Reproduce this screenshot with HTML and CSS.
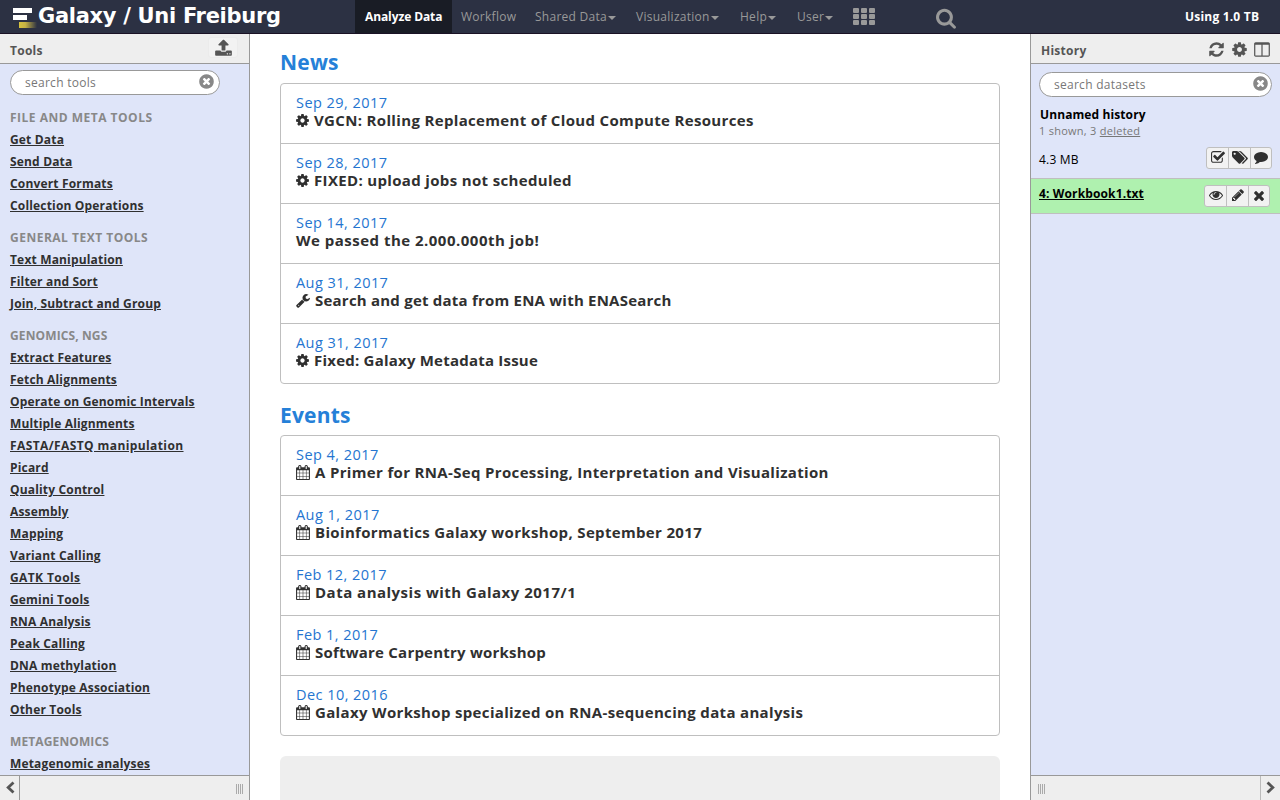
FILE: index.html
```html
<!DOCTYPE html>
<html lang="en">
<head>
<meta charset="utf-8">
<title>Galaxy / Uni Freiburg</title>
<link rel="stylesheet" href="styles.css">
</head>
<body>
<svg class="sprite" aria-hidden="true">
<symbol id="cog" viewBox="0 0 1536 1792"><path transform="translate(0 1536) scale(1 -1)" d="M1024 640q0 106 -75 181t-181 75t-181 -75t-75 -181t75 -181t181 -75t181 75t75 181zM1536 749v-222q0 -12 -8 -23t-20 -13l-185 -28q-19 -54 -39 -91q35 -50 107 -138q10 -12 10 -25t-9 -23q-27 -37 -99 -108t-94 -71q-12 0 -26 9l-138 108q-44 -23 -91 -38q-16 -136 -29 -186q-7 -28 -36 -28h-222q-14 0 -24.5 8.5t-11.5 21.5l-28 184q-49 16 -90 37l-141 -107q-10 -9 -25 -9q-14 0 -25 11q-126 114 -165 168q-7 10 -7 23q0 12 8 23q15 21 51 66.5t54 70.5q-27 50 -41 99l-183 27q-13 2 -21 12.5t-8 23.5v222q0 12 8 23t19 13l186 28q14 46 39 92q-40 57 -107 138q-10 12 -10 24q0 10 9 23q26 36 98.5 107.5t94.5 71.5q13 0 26 -10l138 -107q44 23 91 38q16 136 29 186q7 28 36 28h222q14 0 24.5 -8.5t11.5 -21.5l28 -184q49 -16 90 -37l142 107q9 9 24 9q13 0 25 -10q129 -119 165 -170q7 -8 7 -22q0 -12 -8 -23q-15 -21 -51 -66.5t-54 -70.5q26 -50 41 -98l183 -28q13 -2 21 -12.5t8 -23.5z"/></symbol>
<symbol id="calendar" viewBox="0 0 1664 1792"><path transform="translate(0 1536) scale(1 -1)" d="M128 -128h288v288h-288v-288zM480 -128h320v288h-320v-288zM128 224h288v320h-288v-320zM480 224h320v320h-320v-320zM128 608h288v288h-288v-288zM864 -128h320v288h-320v-288zM480 608h320v288h-320v-288zM1248 -128h288v288h-288v-288zM864 224h320v320h-320v-320zM512 1088v288q0 13 -9.5 22.5t-22.5 9.5h-64q-13 0 -22.5 -9.5t-9.5 -22.5v-288q0 -13 9.5 -22.5t22.5 -9.5h64q13 0 22.5 9.5t9.5 22.5zM1248 224h288v320h-288v-320zM864 608h320v288h-320v-288zM1248 608h288v288h-288v-288zM1280 1088v288q0 13 -9.5 22.5t-22.5 9.5h-64q-13 0 -22.5 -9.5t-9.5 -22.5v-288q0 -13 9.5 -22.5t22.5 -9.5h64q13 0 22.5 9.5t9.5 22.5zM1664 1152v-1280q0 -52 -38 -90t-90 -38h-1408q-52 0 -90 38t-38 90v1280q0 52 38 90t90 38h128v96q0 66 47 113t113 47h64q66 0 113 -47t47 -113v-96h384v96q0 66 47 113t113 47h64q66 0 113 -47t47 -113v-96h128q52 0 90 -38t38 -90z"/></symbol>
<symbol id="wrench" viewBox="0 0 1664 1792"><path transform="translate(0 1536) scale(1 -1)" d="M384 64q0 26 -19 45t-45 19t-45 -19t-19 -45t19 -45t45 -19t45 19t19 45zM1028 484l-682 -682q-37 -37 -90 -37q-52 0 -91 37l-106 108q-38 36 -38 90q0 53 38 91l681 681q39 -98 114.5 -173.5t173.5 -114.5zM1662 919q0 -39 -23 -106q-47 -134 -164.5 -217.5t-258.5 -83.5q-185 0 -316.5 131.5t-131.5 316.5t131.5 316.5t316.5 131.5q58 0 121.5 -16.5t107.5 -46.5q16 -11 16 -28t-16 -28l-293 -169v-224l193 -107q5 3 79 48.5t135.5 81t70.5 35.5q15 0 23.5 -10t8.5 -25z"/></symbol>
<symbol id="refresh" viewBox="0 0 1536 1792"><path transform="translate(0 1536) scale(1 -1)" d="M1511 480q0 -5 -1 -7q-64 -268 -268 -434.5t-478 -166.5q-146 0 -282.5 55t-243.5 157l-129 -129q-19 -19 -45 -19t-45 19t-19 45v448q0 26 19 45t45 19h448q26 0 45 -19t19 -45t-19 -45l-137 -137q71 -66 161 -102t187 -36q134 0 250 65t186 179q11 17 53 117q8 23 30 23h192q13 0 22.5 -9.5t9.5 -22.5zM1536 1280v-448q0 -26 -19 -45t-45 -19h-448q-26 0 -45 19t-19 45t19 45l138 138q-148 137 -349 137q-134 0 -250 -65t-186 -179q-11 -17 -53 -117q-8 -23 -30 -23h-199q-13 0 -22.5 9.5t-9.5 22.5v7q65 268 270 434.5t480 166.5q146 0 284 -55.5t245 -156.5l130 129q19 19 45 19t45 -19t19 -45z"/></symbol>
<symbol id="clear" viewBox="0 0 1536 1792"><path transform="translate(0 1536) scale(1 -1)" d="M1149 414q0 26 -19 45l-181 181l181 181q19 19 19 45q0 27 -19 46l-90 90q-19 19 -46 19q-26 0 -45 -19l-181 -181l-181 181q-19 19 -45 19q-27 0 -46 -19l-90 -90q-19 -19 -19 -46q0 -26 19 -45l181 -181l-181 -181q-19 -19 -19 -45q0 -27 19 -46l90 -90q19 -19 46 -19q26 0 45 19l181 181l181 -181q19 -19 45 -19q27 0 46 19l90 90q19 19 19 46zM1536 640q0 -209 -103 -385.5t-279.5 -279.5t-385.5 -103t-385.5 103t-279.5 279.5t-103 385.5t103 385.5t279.5 279.5t385.5 103t385.5 -103t279.5 -279.5t103 -385.5z"/></symbol>
<symbol id="times" viewBox="0 0 1408 1792"><path transform="translate(0 1536) scale(1 -1)" d="M1298 214q0 -40 -28 -68l-136 -136q-28 -28 -68 -28t-68 28l-294 294l-294 -294q-28 -28 -68 -28t-68 28l-136 136q-28 28 -28 68t28 68l294 294l-294 294q-28 28 -28 68t28 68l136 136q28 28 68 28t68 -28l294 -294l294 294q28 28 68 28t68 -28l136 -136q28 -28 28 -68t-28 -68l-294 -294l294 -294q28 -28 28 -68z"/></symbol>
<symbol id="eye" viewBox="0 0 1792 1792"><path transform="translate(0 1536) scale(1 -1)" d="M1664 576q-152 236 -381 353q61 -104 61 -225q0 -185 -131.5 -316.5t-316.5 -131.5t-316.5 131.5t-131.5 316.5q0 121 61 225q-229 -117 -381 -353q133 -205 333.5 -326.5t434.5 -121.5t434.5 121.5t333.5 326.5zM944 960q0 20 -14 34t-34 14q-125 0 -214.5 -89.5t-89.5 -214.5q0 -20 14 -34t34 -14t34 14t14 34q0 86 61 147t147 61q20 0 34 14t14 34zM1792 576q0 -34 -20 -69q-140 -230 -376.5 -368.5t-499.5 -138.5t-499.5 139t-376.5 368q-20 35 -20 69t20 69q140 229 376.5 368t499.5 139t499.5 -139t376.5 -368q20 -35 20 -69z"/></symbol>
<symbol id="pencil" viewBox="0 0 1536 1792"><path transform="translate(0 1536) scale(1 -1)" d="M363 0l91 91l-235 235l-91 -91v-107h128v-128h107zM886 928q0 22 -22 22q-10 0 -17 -7l-542 -542q-7 -7 -7 -17q0 -22 22 -22q10 0 17 7l542 542q7 7 7 17zM832 1120l416 -416l-832 -832h-416v416zM1515 1024q0 -53 -37 -90l-166 -166l-416 416l166 165q36 38 90 38q53 0 91 -38l235 -234q37 -39 37 -91z"/></symbol>
<symbol id="check" viewBox="0 0 1664 1792"><path transform="translate(0 1536) scale(1 -1)" d="M1408 606v-318q0 -119 -84.5 -203.5t-203.5 -84.5h-832q-119 0 -203.5 84.5t-84.5 203.5v832q0 119 84.5 203.5t203.5 84.5h832q63 0 117 -25q15 -7 18 -23q3 -17 -9 -29l-49 -49q-10 -10 -23 -10q-3 0 -9 2q-23 6 -45 6h-832q-66 0 -113 -47t-47 -113v-832q0 -66 47 -113t113 -47h832q66 0 113 47t47 113v254q0 13 9 22l64 64q10 10 23 10q6 0 12 -3q20 -8 20 -29zM1639 1095l-814 -814q-24 -24 -57 -24t-57 24l-430 430q-24 24 -24 57t24 57l110 110q24 24 57 24t57 -24l263 -263l647 647q24 24 57 24t57 -24l110 -110q24 -24 24 -57t-24 -57z"/></symbol>
<symbol id="tags" viewBox="0 0 1920 1792"><path transform="translate(0 1536) scale(1 -1)" d="M448 1088q0 53 -37.5 90.5t-90.5 37.5t-90.5 -37.5t-37.5 -90.5t37.5 -90.5t90.5 -37.5t90.5 37.5t37.5 90.5zM1515 512q0 -53 -37 -90l-491 -492q-39 -37 -91 -37q-53 0 -90 37l-715 716q-38 37 -64.5 101t-26.5 117v416q0 52 38 90t90 38h416q53 0 117 -26.5t102 -64.5l715 -714q37 -39 37 -91zM1899 512q0 -53 -37 -90l-491 -492q-39 -37 -91 -37q-36 0 -59 14t-53 45l470 470q37 37 37 90q0 52 -37 91l-715 714q-38 38 -102 64.5t-117 26.5h224q53 0 117 -26.5t102 -64.5l715 -714q37 -39 37 -91z"/></symbol>
<symbol id="comment" viewBox="0 0 1792 1792"><path transform="translate(0 1536) scale(1 -1)" d="M1792 640q0 -174 -120 -321.5t-326 -233t-450 -85.5q-70 0 -145 8q-198 -175 -460 -242q-49 -14 -114 -22q-17 -2 -30.5 9t-17.5 29v1q-3 4 -0.5 12t2 10t4.5 9.5l6 9t7 8.5t8 9q7 8 31 34.5t34.5 38t31 39.5t32.5 51t27 59t26 76q-157 89 -247.5 220t-90.5 281q0 130 71 248.5t191 204.5t286 136.5t348 50.5q244 0 450 -85.5t326 -233t120 -321.5z"/></symbol>
<symbol id="upload" viewBox="0 0 1664 1792"><path transform="translate(0 1536) scale(1 -1)" d="M1280 64q0 26 -19 45t-45 19t-45 -19t-19 -45t19 -45t45 -19t45 19t19 45zM1536 64q0 26 -19 45t-45 19t-45 -19t-19 -45t19 -45t45 -19t45 19t19 45zM1664 288v-320q0 -40 -28 -68t-68 -28h-1472q-40 0 -68 28t-28 68v320q0 40 28 68t68 28h427q21 -56 70.5 -92t110.5 -36h256q61 0 110.5 36t70.5 92h427q40 0 68 -28t28 -68zM1339 936q-17 -40 -59 -40h-256v-448q0 -26 -19 -45t-45 -19h-256q-26 0 -45 19t-19 45v448h-256q-42 0 -59 40q-17 39 14 69l448 448q18 19 45 19t45 -19l448 -448q31 -30 14 -69z"/></symbol>
<symbol id="search" viewBox="0 0 1664 1792"><path transform="translate(0 1536) scale(1 -1)" d="M1152 704q0 185 -131.5 316.5t-316.5 131.5t-316.5 -131.5t-131.5 -316.5t131.5 -316.5t316.5 -131.5t316.5 131.5t131.5 316.5zM1664 -128q0 -52 -38 -90t-90 -38q-54 0 -90 38l-343 342q-179 -124 -399 -124q-143 0 -273.5 55.5t-225 150t-150 225t-55.5 273.5t55.5 273.5t150 225t225 150t273.5 55.5t273.5 -55.5t225 -150t150 -225t55.5 -273.5q0 -220 -124 -399l343 -343q37 -37 37 -90z"/></symbol>
<symbol id="columns" viewBox="0 0 1664 1792"><path transform="translate(0 1536) scale(1 -1)" d="M160 0h608v1152h-640v-1120q0 -13 9.5 -22.5t22.5 -9.5zM1536 32v1120h-640v-1152h608q13 0 22.5 9.5t9.5 22.5zM1664 1248v-1216q0 -66 -47 -113t-113 -47h-1344q-66 0 -113 47t-47 113v1216q0 66 47 113t113 47h1344q66 0 113 -47t47 -113z"/></symbol>
</svg>

<header class="masthead">
  <a class="brand">
    <svg class="logo" width="26" height="22" viewBox="0 0 26 22"><defs><linearGradient id="gold"><stop offset="0" stop-color="#d6c23f"/><stop offset=".35" stop-color="#c6b244"/><stop offset="1" stop-color="#2c3143"/></linearGradient></defs><path fill="#fff" d="M1 1h19v5H1zM1 8h14v5H1z"/><path fill="url(#gold)" d="M7 15h18v6H7z"/></svg>
    <span class="brand-name">Galaxy / Uni Freiburg</span>
  </a>
  <nav class="menu">
    <a class="menu-item active">Analyze Data</a>
    <a class="menu-item workflow">Workflow</a>
    <a class="menu-item shared">Shared Data<i class="caret"></i></a>
    <a class="menu-item visual">Visualization<i class="caret"></i></a>
    <a class="menu-item help">Help<i class="caret"></i></a>
    <a class="menu-item user">User<i class="caret"></i></a>
    <svg class="apps" width="22" height="17" viewBox="0 0 22 17"><g fill="#999"><rect width="6" height="5" rx="1"/><rect x="8" width="6" height="5" rx="1"/><rect x="16" width="6" height="5" rx="1"/><rect y="6" width="6" height="5" rx="1"/><rect x="8" y="6" width="6" height="5" rx="1"/><rect x="16" y="6" width="6" height="5" rx="1"/><rect y="12" width="6" height="5" rx="1"/><rect x="8" y="12" width="6" height="5" rx="1"/><rect x="16" y="12" width="6" height="5" rx="1"/></g></svg>
    <svg class="find" width="20" height="22"><use href="#search"/></svg>
  </nav>
  <span class="quota">Using 1.0 TB</span>
</header>

<div class="workspace">
  <aside class="panel tools">
    <div class="panel-head"><span>Tools</span><button class="upload"><svg width="17" height="18"><use href="#upload"/></svg></button></div>
    <div class="panel-body">
      <div class="search-box"><span>search tools</span><svg width="15" height="17"><use href="#clear"/></svg></div>
      <h3>FILE AND META TOOLS</h3>
      <ul><li><a>Get Data</a></li><li><a>Send Data</a></li><li><a>Convert Formats</a></li><li><a>Collection Operations</a></li></ul>
      <h3>GENERAL TEXT TOOLS</h3>
      <ul><li><a>Text Manipulation</a></li><li><a>Filter and Sort</a></li><li><a>Join, Subtract and Group</a></li></ul>
      <h3 class="tight">GENOMICS, NGS</h3>
      <ul><li><a>Extract Features</a></li><li><a>Fetch Alignments</a></li><li><a>Operate on Genomic Intervals</a></li><li><a>Multiple Alignments</a></li><li><a class="wide">FASTA/FASTQ manipulation</a></li><li><a>Picard</a></li><li><a>Quality Control</a></li><li><a>Assembly</a></li><li><a>Mapping</a></li><li><a>Variant Calling</a></li><li><a class="wide">GATK Tools</a></li><li><a>Gemini Tools</a></li><li><a>RNA Analysis</a></li><li><a>Peak Calling</a></li><li><a>DNA methylation</a></li><li><a>Phenotype Association</a></li><li><a>Other Tools</a></li></ul>
      <h3 class="tight">METAGENOMICS</h3>
      <ul><li><a>Metagenomic analyses</a></li></ul>
    </div>
    <div class="panel-foot"><span class="collapse"><svg width="9" height="13" viewBox="0 0 9 13"><path d="M7.5 1.5L2.2 6.5L7.5 11.5"/></svg></span><span class="grip"></span></div>
  </aside>

  <main class="center">
    <h2>News</h2>
    <div class="list">
      <article><time>Sep 29, 2017</time><p><svg width="13" height="15"><use href="#cog"/></svg>VGCN: Rolling Replacement of Cloud Compute Resources</p></article>
      <article><time>Sep 28, 2017</time><p><svg width="13" height="15"><use href="#cog"/></svg>FIXED: upload jobs not scheduled</p></article>
      <article><time>Sep 14, 2017</time><p class="wide">We passed the 2.000.000th job!</p></article>
      <article><time>Aug 31, 2017</time><p class="tight"><svg width="14" height="15"><use href="#wrench"/></svg>Search and get data from ENA with ENASearch</p></article>
      <article><time>Aug 31, 2017</time><p class="tight"><svg width="13" height="15"><use href="#cog"/></svg>Fixed: Galaxy Metadata Issue</p></article>
    </div>
    <h2 class="events">Events</h2>
    <div class="list">
      <article><time>Sep 4, 2017</time><p><svg width="14" height="15"><use href="#calendar"/></svg>A Primer for RNA-Seq Processing, Interpretation and Visualization</p></article>
      <article><time>Aug 1, 2017</time><p><svg width="14" height="15"><use href="#calendar"/></svg>Bioinformatics Galaxy workshop, September 2017</p></article>
      <article><time>Feb 12, 2017</time><p class="wide"><svg width="14" height="15"><use href="#calendar"/></svg>Data analysis with Galaxy 2017/1</p></article>
      <article><time>Feb 1, 2017</time><p class="tight"><svg width="14" height="15"><use href="#calendar"/></svg>Software Carpentry workshop</p></article>
      <article><time>Dec 10, 2016</time><p><svg width="14" height="15"><use href="#calendar"/></svg>Galaxy Workshop specialized on RNA-sequencing data analysis</p></article>
    </div>
    <div class="jumbo"></div>
  </main>

  <aside class="panel history">
    <div class="panel-head"><span>History</span><span class="head-icons"><svg width="15" height="17"><use href="#refresh"/></svg><svg width="15" height="17"><use href="#cog"/></svg><svg width="16" height="17"><use href="#columns"/></svg></span></div>
    <div class="panel-body">
      <div class="search-box"><span>search datasets</span><svg width="15" height="17"><use href="#clear"/></svg></div>
      <div class="history-name">Unnamed history</div>
      <div class="counts">1 shown, 3 <u>deleted</u></div>
      <div class="size-row"><span>4.3 MB</span><span class="buttons"><b><svg width="14" height="15"><use href="#check"/></svg></b><b><svg width="16" height="15"><use href="#tags"/></svg></b><b><svg width="14" height="14"><use href="#comment"/></svg></b></span></div>
      <div class="dataset"><a>4: Workbook1.txt</a><span class="buttons"><b><svg width="14" height="14"><use href="#eye"/></svg></b><b><svg width="12" height="14"><use href="#pencil"/></svg></b><b><svg width="12" height="15"><use href="#times"/></svg></b></span></div>
    </div>
    <div class="panel-foot"><span class="grip"></span><span class="collapse"><svg width="9" height="13" viewBox="0 0 9 13"><path d="M1.5 1.5L6.8 6.5L1.5 11.5"/></svg></span></div>
  </aside>
</div>
</body>
</html>
```

FILE: styles.css
```css
* { box-sizing: border-box; }
body { margin: 0; width: 1280px; height: 800px; overflow: hidden; display: flex; flex-direction: column; font: 12px/18px "Lucida Grande", "Open Sans", sans-serif; color: #303030; background: #fff; }
h2, h3, p, ul { margin: 0; padding: 0; }
ul { list-style: none; }
svg { display: block; flex: none; fill: currentColor; }
.sprite { position: absolute; width: 0; height: 0; }

.masthead { height: 34px; flex: none; display: flex; align-items: stretch; background: #2c3143; border-bottom: 1px solid #1a1225; color: #999; }
.brand { width: 355px; display: flex; padding: 7px 0 0 12px; }
.brand-name { font: bold 21px/22px Verdana, "DejaVu Sans", sans-serif; color: #fff; margin: -2px 0 0; letter-spacing: -.3px; white-space: nowrap; }
.menu { display: flex; width: 830px; }
.menu-item { padding: 8px 0 0 9px; height: 33px; white-space: nowrap; letter-spacing: .27px; display: flex; }
.menu-item.active { width: 97px; padding-left: 10px; background: #191c25; color: #fff; font-weight: 700; letter-spacing: -.1px; }
.workflow { width: 74px; }
.shared { width: 101px; }
.visual { width: 104px; }
.help { width: 57px; }
.user { width: 65px; }
.caret { width: 0; height: 0; margin: 8px 0 0 1px; border: 4px solid transparent; border-top-color: #999; border-bottom: 0; }
.apps { margin: 8px 0 0; width: 22px; }
.find { margin: 7px 0 0 61px; }
.quota { color: #fff; font-weight: 700; letter-spacing: .2px; padding-top: 8px; white-space: nowrap; }

.workspace { flex: 1; min-height: 0; display: flex; }
.panel { width: 250px; flex: none; display: flex; flex-direction: column; background: #dfe5f9; }
.tools { border-right: 1px solid #999; }
.history { border-left: 1px solid #999; color: #000; }
.panel-head { height: 30px; flex: none; display: flex; justify-content: space-between; padding: 2px 10px 0; background: #eee; border-bottom: 1px solid #999; font-weight: 700; line-height: 29px; color: #555; letter-spacing: .25px; }
.upload { width: 30px; height: 21px; margin: 1px 1px 0 0; padding: 1px 0 0 6px; border: 1px solid #ebebeb; border-radius: 3px; background: #f2f2f2; color: #555; }
.head-icons { display: flex; gap: 8px; padding-top: 5px; }
.head-icons svg:last-child { margin-left: -1px; }
.panel-body { flex: 1; min-height: 0; overflow: hidden; }
.panel-foot { height: 25px; flex: none; display: flex; align-items: stretch; justify-content: space-between; border-top: 1px solid #999; background: #eee; }
.collapse { width: 20px; padding: 5px 0 0 6px; border-right: 1px solid #999; }
.collapse path { fill: none; stroke: #555; stroke-width: 2.8; }
.grip { width: 7px; height: 10px; margin: 8px 6px 0 7px; background: repeating-linear-gradient(90deg, #aaa 0 1px, transparent 1px 2px); }
.history .collapse { border: 0; border-left: 1px solid #bbb; padding-left: 5px; }

.search-box { height: 25px; display: flex; justify-content: space-between; padding: 3px 5px 0 14px; border: 1px solid #999; border-radius: 13px; background: #fff; color: #777; letter-spacing: .27px; }
.search-box svg { color: #888; margin-top: -1px; }
.tools .search-box { width: 210px; margin: 6px 0 0 10px; }
.tools h3 { margin: 13px 0 0 10px; font-size: 12px; line-height: 18px; height: 20px; font-weight: 700; letter-spacing: .5px; color: #888; }
.tools h3.tight { letter-spacing: .12px; }
.tools .search-box + h3 { margin-top: 14px; }
.tools ul { padding-left: 10px; }
.tools li { height: 22px; line-height: 22px; }
.tools li a { font-weight: 700; text-decoration: underline; text-underline-offset: 1px; letter-spacing: .17px; }
.tools li a.wide { letter-spacing: .4px; }
.tools ul + h3 { margin-top: 12px; }

.center { width: 780px; padding: 16px 30px 0; overflow: hidden; }
.center h2 { font-size: 21px; line-height: 24px; height: 33px; color: #2580d8; font-weight: 700; letter-spacing: .2px; }
.center .events { margin-top: 19px; height: 32px; }
.list { border: 1px solid #bfbfbf; border-radius: 4px; }
article { height: 60px; padding: 10px 15px 0; border-bottom: 1px solid #bfbfbf; }
article:last-child { border: 0; height: 59px; }
time { display: block; color: #2575d0; font-size: 14.5px; line-height: 18px; letter-spacing: .45px; }
article p { display: flex; gap: 5px; margin-top: -1px; font-size: 15px; line-height: 18px; font-weight: 700; letter-spacing: .34px; white-space: nowrap; }
article p.tight { letter-spacing: .22px; }
article p.wide { letter-spacing: .49px; }
article p svg { margin-top: 2px; }
.jumbo { height: 80px; margin-top: 20px; border-radius: 6px 6px 0 0; background: #eee; }

.history .search-box { margin: 8px 8px 0; padding-right: 3px; }
.history-name { margin: 9px 0 0 9px; font-weight: 700; letter-spacing: .1px; }
.counts { margin: -2px 0 0 8px; height: 17px; line-height: 17px; font-size: 11px; color: #777; letter-spacing: .26px; }
.size-row { height: 39px; display: flex; justify-content: space-between; padding: 8px 8px 0; }
.size-row > span:first-child { padding-top: 4px; letter-spacing: .2px; }
.buttons { display: flex; height: 22px; border: 1px solid #bfbfbf; border-radius: 3px; background: #f2f2f2; color: #303030; }
.buttons b { width: 22px; display: flex; justify-content: center; padding-top: 2px; border-left: 1px solid #bfbfbf; }
.buttons b:first-child { border: 0; width: 21px; }
.buttons b:last-child { width: 21px; }
.dataset { height: 36px; display: flex; justify-content: space-between; padding: 6px 10px 0 8px; background: #aff1af; border: solid #bfbfbf; border-width: 1px 0; }
.dataset a { font-weight: 700; text-decoration: underline; letter-spacing: .13px; }
```
